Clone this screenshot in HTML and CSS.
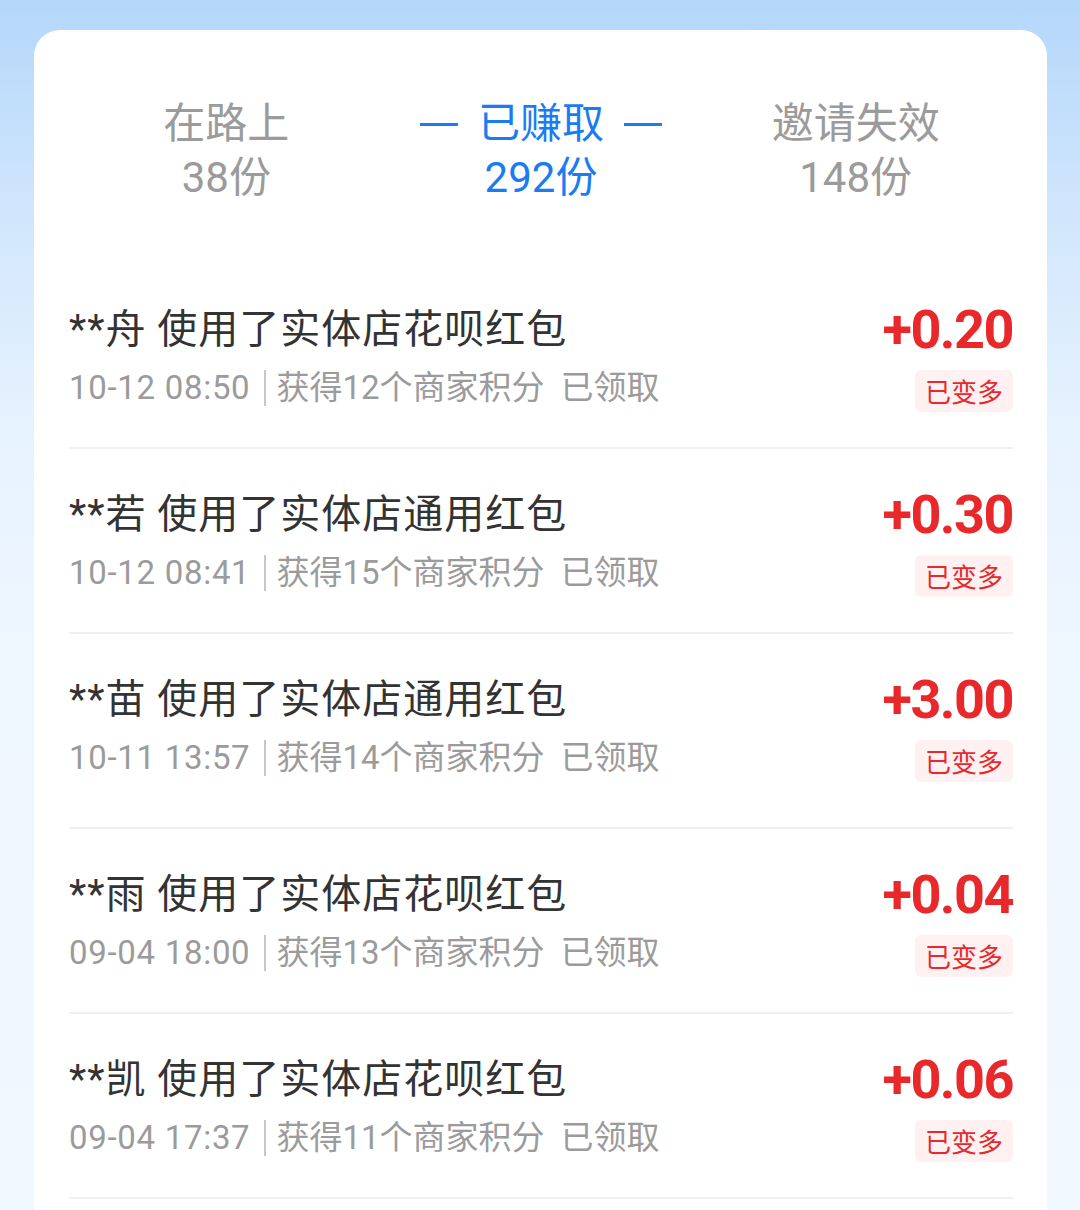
FILE: index.html
```html
<!DOCTYPE html>
<html lang="zh">
<head>
<meta charset="utf-8">
<link rel="stylesheet" href="styles.css">
</head>
<body>
<div class="card">
  <div class="tabs">
    <div class="tab">
      <div class="tab-label">在路上</div>
      <div class="tab-count">38份</div>
    </div>
    <div class="tab active">
      <div class="tab-label"><span class="dash"></span>已赚取<span class="dash"></span></div>
      <div class="tab-count">292份</div>
    </div>
    <div class="tab">
      <div class="tab-label">邀请失效</div>
      <div class="tab-count">148份</div>
    </div>
  </div>
  <div class="list">
    <div class="row">
      <div class="info">
        <div class="title">**舟 使用了实体店花呗红包</div>
        <div class="sub"><span class="time">10-12 08:50</span><span class="sep"></span><span>获得12个商家积分</span><span class="status">已领取</span></div>
      </div>
      <div class="side">
        <div class="amount">+0.20</div>
        <div class="badge">已变多</div>
      </div>
    </div>
    <div class="row">
      <div class="info">
        <div class="title">**若 使用了实体店通用红包</div>
        <div class="sub"><span class="time">10-12 08:41</span><span class="sep"></span><span>获得15个商家积分</span><span class="status">已领取</span></div>
      </div>
      <div class="side">
        <div class="amount">+0.30</div>
        <div class="badge">已变多</div>
      </div>
    </div>
    <div class="row row-tall">
      <div class="info">
        <div class="title">**苗 使用了实体店通用红包</div>
        <div class="sub"><span class="time">10-11 13:57</span><span class="sep"></span><span>获得14个商家积分</span><span class="status">已领取</span></div>
      </div>
      <div class="side">
        <div class="amount">+3.00</div>
        <div class="badge">已变多</div>
      </div>
    </div>
    <div class="row">
      <div class="info">
        <div class="title">**雨 使用了实体店花呗红包</div>
        <div class="sub"><span class="time">09-04 18:00</span><span class="sep"></span><span>获得13个商家积分</span><span class="status">已领取</span></div>
      </div>
      <div class="side">
        <div class="amount">+0.04</div>
        <div class="badge">已变多</div>
      </div>
    </div>
    <div class="row">
      <div class="info">
        <div class="title">**凯 使用了实体店花呗红包</div>
        <div class="sub"><span class="time">09-04 17:37</span><span class="sep"></span><span>获得11个商家积分</span><span class="status">已领取</span></div>
      </div>
      <div class="side">
        <div class="amount">+0.06</div>
        <div class="badge">已变多</div>
      </div>
    </div>
  </div>
</div>
</body>
</html>
```

FILE: styles.css
```css
* { box-sizing: border-box; }
html, body { margin: 0; padding: 0; }
body {
  width: 1080px;
  height: 1210px;
  overflow: hidden;
  font-family: Roboto, "Noto Sans CJK SC", sans-serif;
  background: linear-gradient(180deg, #b4d7fa 0px, #cfe5fc 200px, #e6f2fe 420px, #eef6ff 640px, #f2f8ff 1210px);
}
.card {
  margin: 30px 0 0 34px;
  width: 1013px;
  height: 1180px;
  background: #fff;
  border-radius: 26px 26px 0 0;
  padding: 67px 34px 0 35px;
}
.tabs {
  display: grid;
  grid-template-columns: repeat(3, 1fr);
  margin-bottom: 59px;
}
.tab {
  display: flex;
  flex-direction: column;
  align-items: center;
  color: #9b9b9b;
}
.tab-label {
  font-size: 42px;
  line-height: 54px;
  display: flex;
  align-items: center;
}
.tab-count {
  font-size: 42px;
  line-height: 54px;
}
.tab.active { color: #1b7bf2; }
.dash {
  display: inline-block;
  width: 38px;
  height: 3px;
  background: #1b7bf2;
  margin: 0 20px;
}
.row {
  display: flex;
  justify-content: space-between;
  height: 185px;
  padding-top: 41px;
  border-bottom: 2px solid #f0f0f0;
}
.row-tall { height: 195px; }
.title {
  font-size: 40px;
  line-height: 50px;
  color: #333;
  letter-spacing: 1px;
}
.sub {
  margin-top: 11px;
  font-size: 33px;
  line-height: 44px;
  color: #9b9b9b;
  display: flex;
  align-items: center;
}
.time { letter-spacing: 0.7px; }
.sep {
  display: inline-block;
  width: 2px;
  height: 36px;
  background: #c8c8c8;
  margin: 0 10px 0 14px;
}
.status { margin-left: 16px; }
.side {
  display: flex;
  flex-direction: column;
  align-items: flex-end;
}
.amount {
  font-size: 54px;
  line-height: 50px;
  font-weight: 700;
  color: #e8282b;
  letter-spacing: -1.5px;
}
.badge {
  margin-top: 15px;
  height: 42px;
  padding: 0 10px;
  font-size: 26px;
  line-height: 42px;
  color: #e8282b;
  background: #fff1f1;
  border-radius: 6px;
  font-family: "Noto Sans CJK SC", sans-serif;
}
```
